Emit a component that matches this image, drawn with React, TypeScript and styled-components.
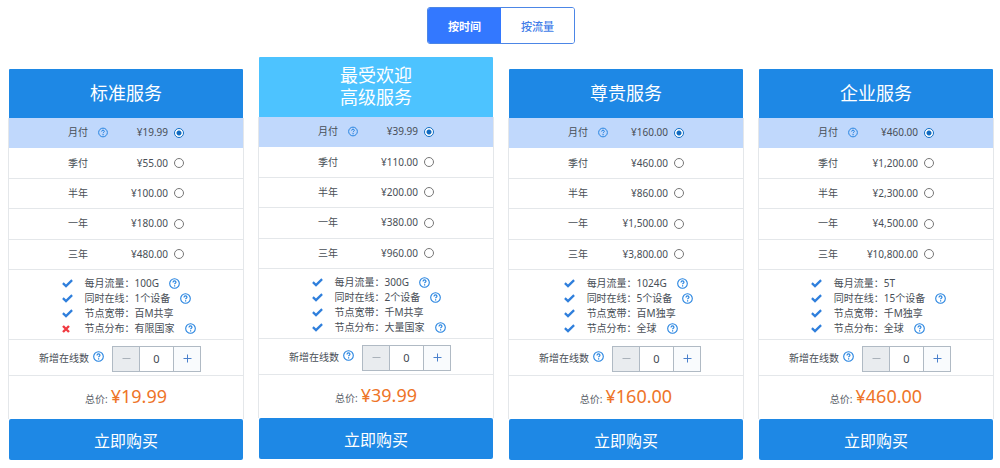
import React, { useId, useState } from "react";
import styled, { createGlobalStyle } from "styled-components";

const GlobalStyle = createGlobalStyle`
  *, *::before, *::after { box-sizing: border-box; }
  body {
    margin: 0;
    background: #fff;
    color: #484e56;
    font-family: "Noto Sans", "Noto Sans CJK SC", sans-serif;
    font-size: 10px;
    line-height: 15px;
  }
  button, input { font-family: inherit; margin: 0; padding: 0; }
  button { cursor: pointer; }
`;

const Page = styled.main`
  padding: 7px 6px 8px 8px;
`;

const Tabs = styled.div`
  display: flex;
  width: 148px;
  margin: 0 auto 13px;
  border: 1px solid #4c86e6;
  border-radius: 3px;
  overflow: hidden;
`;

const Tab = styled.button<{ $active: boolean }>`
  flex: 1;
  height: 35px;
  border: 0;
  background: ${(p) => (p.$active ? "#3378ff" : "#fff")};
  color: ${(p) => (p.$active ? "#fff" : "#3f7ce8")};
  font-size: 11px;
  font-weight: ${(p) => (p.$active ? 700 : 500)};
`;

const Plans = styled.div`
  display: grid;
  grid-template-columns: repeat(4, minmax(0, 1fr));
  align-items: start;
  gap: 14px;
`;

const Card = styled.section<{ $featured: boolean }>`
  margin-top: ${(p) => (p.$featured ? 0 : 12)}px;
`;

const CardTitle = styled.h2<{ $featured: boolean }>`
  display: flex;
  align-items: center;
  justify-content: center;
  min-height: ${(p) => (p.$featured ? 60 : 49)}px;
  margin: 0 1px;
  padding-bottom: 2px;
  border-radius: 1px 1px 0 0;
  background: ${(p) => (p.$featured ? "#4dc3ff" : "#1e88e5")};
  color: #fff;
  font-size: 18px;
  font-weight: 400;
  line-height: 22px;
  text-align: center;
  white-space: pre-line;
`;

const CardBody = styled.div`
  border: solid #e4e7ea;
  border-width: 0 1px;
`;

const Options = styled.div`
  display: grid;
  grid-auto-rows: 1fr;
  min-height: 152px;
`;

const Option = styled.label<{ $selected: boolean }>`
  display: grid;
  grid-template-columns: 30px 10px 60px 16px;
  align-items: center;
  justify-content: center;
  border-bottom: 1px solid ${(p) => (p.$selected ? "#c0d8fc" : "#e4e7ea")};
  background: ${(p) => (p.$selected ? "#c0d8fc" : "transparent")};
  cursor: pointer;
`;

const OptionHelp = styled.span`
  display: flex;
`;

const OptionPrice = styled.span`
  text-align: right;
`;

const Radio = styled.input`
  appearance: none;
  justify-self: end;
  width: 10px;
  height: 10px;
  border: 1px solid #777;
  border-radius: 50%;
  background: #fff;
  &:checked {
    border-color: #1470c4;
    background: radial-gradient(circle, #0f6ac0 0 2px, #fff 3px);
  }
`;

const Features = styled.ul`
  display: flex;
  flex-direction: column;
  width: fit-content;
  margin: 0 auto;
  padding: 6px 0 3px 5px;
  list-style: none;
`;

const Feature = styled.li`
  display: grid;
  grid-template-columns: 23px auto 1fr;
  align-items: center;
  height: 15px;
  white-space: nowrap;
  & > span + svg { margin-left: 10px; }
`;

const Extra = styled.div`
  display: flex;
  align-items: center;
  justify-content: center;
  height: 37px;
  padding: 2px 12px 0 0;
  border: solid #e4e7ea;
  border-width: 1px 0;
`;

const ExtraLabel = styled.label`
  display: flex;
  align-items: flex-start;
  gap: 4px;
  margin-right: 8px;
`;

const Stepper = styled.div`
  display: flex;
  width: 89px;
  height: 26px;
  border: 1px solid #b0bac4;
`;

const StepButton = styled.button`
  display: flex;
  align-items: center;
  justify-content: center;
  width: 26px;
  border: 0;
  background: #f9fbfd;
  color: #4a80cc;
  &:disabled { background: #e9ecef; color: #aab2ba; cursor: default; }
`;

const Quantity = styled.input`
  flex: 1;
  min-width: 0;
  border: solid #b0bac4;
  border-width: 0 1px;
  border-radius: 0;
  background: #fff;
  color: #414750;
  font-size: 11px;
  text-align: center;
`;

const Total = styled.p`
  display: flex;
  align-items: baseline;
  justify-content: center;
  gap: 3px;
  height: 43px;
  margin: 0;
  padding-top: 8px;
  color: #5a6068;
`;

const Amount = styled.strong`
  color: #ee7428;
  font-size: 18px;
  font-weight: 400;
  line-height: 25px;
`;

const BuyBar = styled.div`
  padding: 0 1px;
`;

const Buy = styled.button`
  display: block;
  width: 100%;
  height: 41px;
  border: 0;
  border-radius: 2px;
  background: #1e88e5;
  color: #fff;
  font-size: 16px;
`;

const HelpIcon = () => (
  <svg width="11" height="11" viewBox="0 0 11 11" fill="none" stroke="#2583e0" aria-hidden="true">
    <circle cx="5.5" cy="5.5" r="4.8" strokeWidth="1.1" />
    <path d="M4 4.5c0-1 .6-1.6 1.5-1.6S7 3.4 7 4.2c0 1-1.4 1-1.4 2.1" strokeWidth="1.1" />
    <path d="M5.6 7.2v1.2" strokeWidth="1.2" />
  </svg>
);

const CheckIcon = () => (
  <svg width="11" height="9" viewBox="0 0 11 9" fill="none" stroke="#2f7fdc" strokeWidth="2.3" aria-hidden="true">
    <path d="M.9 4.2 4 7.1 10.1 1.2" />
  </svg>
);

const CrossIcon = () => (
  <svg width="8" height="8" viewBox="0 0 8 8" fill="none" stroke="#f03b42" strokeWidth="2.4" aria-hidden="true">
    <path d="m1 1 6 6M7 1 1 7" />
  </svg>
);

const MinusIcon = () => (
  <svg width="9" height="9" viewBox="0 0 9 9" stroke="currentColor" aria-hidden="true">
    <path d="M.5 4.5h8" />
  </svg>
);

const PlusIcon = () => (
  <svg width="9" height="9" viewBox="0 0 9 9" stroke="currentColor" aria-hidden="true">
    <path d="M.5 4.5h8M4.5.5v8" />
  </svg>
);

type FeatureItem = { text: string; help?: boolean; missing?: boolean };
type Plan = { title: string; featured?: boolean; prices: string[]; features: FeatureItem[] };

const periods = ["月付", "季付", "半年", "一年", "三年"];

const plans: Plan[] = [
  {
    title: "标准服务",
    prices: ["¥19.99", "¥55.00", "¥100.00", "¥180.00", "¥480.00"],
    features: [
      { text: "每月流量：100G", help: true },
      { text: "同时在线：1个设备", help: true },
      { text: "节点宽带：百M共享" },
      { text: "节点分布：有限国家", help: true, missing: true },
    ],
  },
  {
    title: "最受欢迎\n高级服务",
    featured: true,
    prices: ["¥39.99", "¥110.00", "¥200.00", "¥380.00", "¥960.00"],
    features: [
      { text: "每月流量：300G", help: true },
      { text: "同时在线：2个设备", help: true },
      { text: "节点宽带：千M共享" },
      { text: "节点分布：大量国家", help: true },
    ],
  },
  {
    title: "尊贵服务",
    prices: ["¥160.00", "¥460.00", "¥860.00", "¥1,500.00", "¥3,800.00"],
    features: [
      { text: "每月流量：1024G", help: true },
      { text: "同时在线：5个设备", help: true },
      { text: "节点宽带：百M独享" },
      { text: "节点分布：全球", help: true },
    ],
  },
  {
    title: "企业服务",
    prices: ["¥460.00", "¥1,200.00", "¥2,300.00", "¥4,500.00", "¥10,800.00"],
    features: [
      { text: "每月流量：5T" },
      { text: "同时在线：15个设备", help: true },
      { text: "节点宽带：千M独享" },
      { text: "节点分布：全球", help: true },
    ],
  },
];

function PlanCard({ plan }: { plan: Plan }) {
  const id = useId();
  const [selected, setSelected] = useState(0);
  const [quantity, setQuantity] = useState(0);
  const featured = Boolean(plan.featured);

  return (
    <Card $featured={featured}>
      <CardTitle $featured={featured}>{plan.title}</CardTitle>
      <CardBody>
        <Options>
          {periods.map((period, i) => (
            <Option key={period} $selected={i === selected}>
              <span>{period}</span>
              <OptionHelp>{i === 0 && <HelpIcon />}</OptionHelp>
              <OptionPrice>{plan.prices[i]}</OptionPrice>
              <Radio type="radio" name={`${id}-period`} checked={i === selected} onChange={() => setSelected(i)} />
            </Option>
          ))}
        </Options>
        <Features>
          {plan.features.map((f) => (
            <Feature key={f.text}>
              {f.missing ? <CrossIcon /> : <CheckIcon />}
              <span>{f.text}</span>
              {f.help && <HelpIcon />}
            </Feature>
          ))}
        </Features>
        <Extra>
          <ExtraLabel htmlFor={`${id}-extra`}>
            新增在线数
            <HelpIcon />
          </ExtraLabel>
          <Stepper>
            <StepButton
              type="button"
              aria-label="减少"
              disabled={quantity === 0}
              onClick={() => setQuantity(quantity - 1)}
            >
              <MinusIcon />
            </StepButton>
            <Quantity
              id={`${id}-extra`}
              inputMode="numeric"
              value={quantity}
              onChange={(e) => setQuantity(Number(e.target.value.replace(/\D/g, "")))}
            />
            <StepButton type="button" aria-label="增加" onClick={() => setQuantity(quantity + 1)}>
              <PlusIcon />
            </StepButton>
          </Stepper>
        </Extra>
        <Total>
          总价: <Amount>{plan.prices[selected]}</Amount>
        </Total>
      </CardBody>
      <BuyBar>
        <Buy type="button">立即购买</Buy>
      </BuyBar>
    </Card>
  );
}

export default function App() {
  const [mode, setMode] = useState(0);
  return (
    <>
      <GlobalStyle />
      <Page>
        <Tabs>
          {["按时间", "按流量"].map((name, i) => (
            <Tab key={name} type="button" $active={mode === i} aria-pressed={mode === i} onClick={() => setMode(i)}>
              {name}
            </Tab>
          ))}
        </Tabs>
        <Plans>
          {plans.map((plan) => (
            <PlanCard key={plan.title} plan={plan} />
          ))}
        </Plans>
      </Page>
    </>
  );
}
